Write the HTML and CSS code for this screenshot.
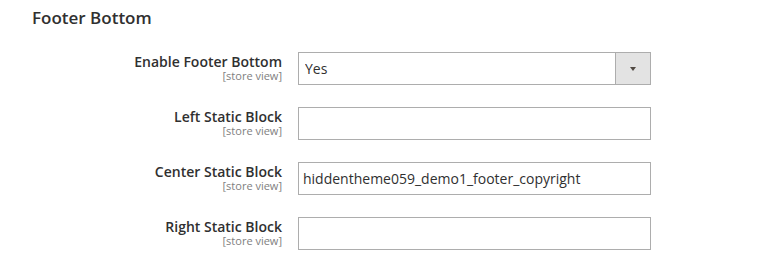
FILE: index.html
```html
<!DOCTYPE html>
<html lang="en">
<head>
    <meta charset="UTF-8">
    <meta name="viewport" content="width=device-width, initial-scale=1.0">
    <title>Footer Bottom</title>
    <link rel="stylesheet" href="styles.css">
</head>
<body>

<div class="section">
    <h2 class="section-title">Footer Bottom</h2>

    <div class="field">
        <label class="field-label" for="enable">
            <span class="label-text">Enable Footer Bottom</span>
            <span class="scope">[store view]</span>
        </label>
        <div class="select-wrap">
            <select id="enable" class="control">
                <option>Yes</option>
                <option>No</option>
            </select>
            <span class="select-arrow"></span>
        </div>
    </div>

    <div class="field">
        <label class="field-label" for="left">
            <span class="label-text">Left Static Block</span>
            <span class="scope">[store view]</span>
        </label>
        <input type="text" id="left" class="control" value="">
    </div>

    <div class="field">
        <label class="field-label" for="center">
            <span class="label-text">Center Static Block</span>
            <span class="scope">[store view]</span>
        </label>
        <input type="text" id="center" class="control" value="hiddentheme059_demo1_footer_copyright">
    </div>

    <div class="field">
        <label class="field-label" for="right">
            <span class="label-text">Right Static Block</span>
            <span class="scope">[store view]</span>
        </label>
        <input type="text" id="right" class="control" value="">
    </div>
</div>

</body>
</html>
```

FILE: styles.css
```css
body {
    font-family: 'Open Sans', sans-serif;
    color: #303030;
    background-color: #ffffff;
    margin: 0;
    padding: 0;
}
.section {
    padding: 8px 0 0 32px;
}
.section-title {
    font-size: 17px;
    font-weight: 600;
    line-height: 20px;
    margin: 0 0 24px 0;
    color: #303030;
}
.field {
    display: grid;
    grid-template-columns: 250px 353px;
    column-gap: 16px;
    margin-bottom: 22px;
}
.field-label {
    text-align: right;
    padding-top: 1px;
}
.label-text {
    display: block;
    font-size: 14px;
    font-weight: 600;
    line-height: 17px;
}
.scope {
    display: block;
    font-size: 11px;
    font-weight: 400;
    line-height: 11px;
    color: #808080;
}
.control {
    box-sizing: border-box;
    width: 353px;
    height: 33px;
    margin: 0;
    padding: 0 4px;
    border: 1px solid #adadad;
    border-radius: 0;
    background-color: #ffffff;
    font-family: 'Open Sans', sans-serif;
    font-size: 14px;
    color: #303030;
    outline: none;
}
.select-wrap {
    position: relative;
    width: 353px;
    height: 33px;
}
select.control {
    appearance: none;
    -webkit-appearance: none;
    padding-left: 6px;
}
.select-arrow {
    position: absolute;
    top: 1px;
    right: 1px;
    width: 34px;
    height: 31px;
    background-color: #e3e3e3;
    border-left: 1px solid #adadad;
    pointer-events: none;
}
.select-arrow::after {
    content: '';
    position: absolute;
    left: 14px;
    top: 14px;
    border-left: 3px solid transparent;
    border-right: 3px solid transparent;
    border-top: 4px solid #514943;
}
```
